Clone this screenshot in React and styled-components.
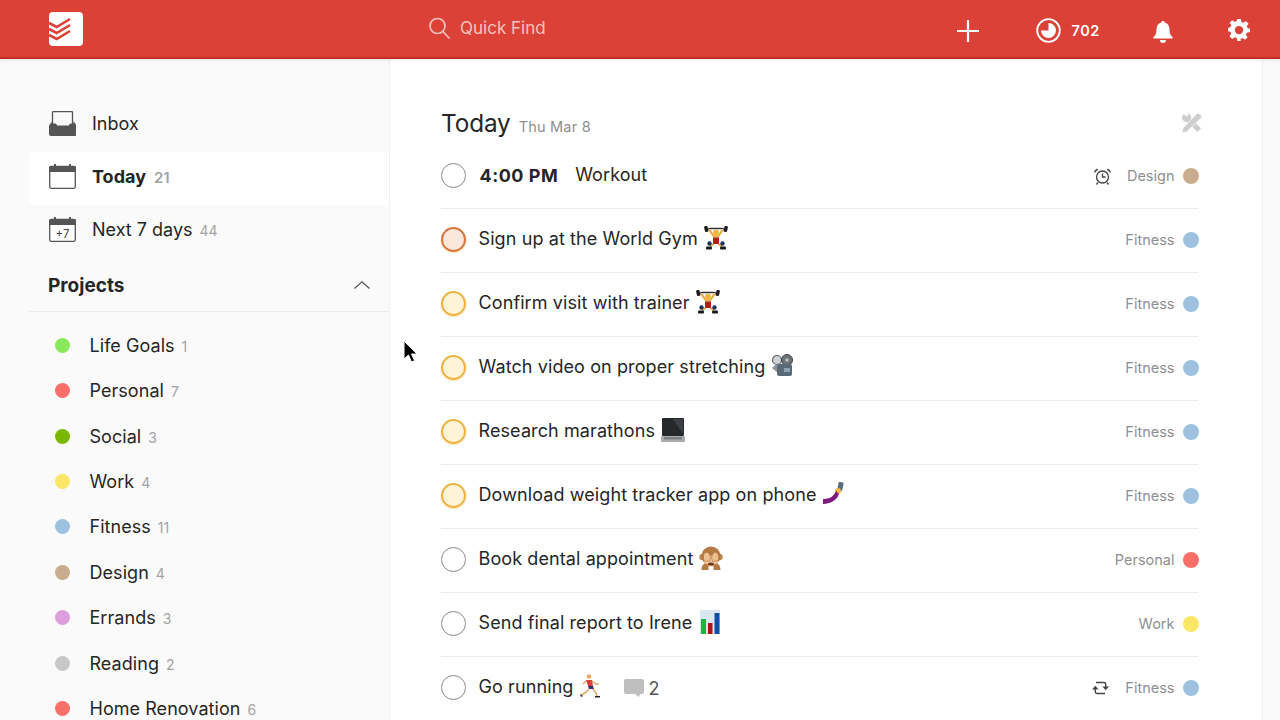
import React from "react";
import styled, { createGlobalStyle } from "styled-components";

const Global = createGlobalStyle`
  html, body { margin: 0; padding: 0; height: 720px; overflow: hidden; background: #fff; }
  body { font-family: Inter, "Noto Sans", "Liberation Sans", sans-serif; color: #262626; -webkit-font-smoothing: antialiased; }
  * { box-sizing: border-box; }
`;

const Page = styled.div`
  position: relative; width: 1280px; height: 720px; overflow: hidden;
  display: flex; flex-direction: column;
`;
const TopBar = styled.header`
  flex: 0 0 59px; height: 59px; background: #dc4138; border-bottom: 2px solid #c42c24;
  box-shadow: 0 1px 3px rgba(0,0,0,.10); position: relative; z-index: 2;
  display: grid; grid-template-columns: 428px 1fr auto; align-items: center; color: #fff;
`;
const LogoWrap = styled.div`padding-left: 49px; display: flex; align-items: center; height: 57px;`;
const Search = styled.div`display: flex; align-items: center; gap: 10px; color: #f6c2bd; font-size: 17px; height: 55px; margin-bottom: 1px;`;
const Actions = styled.div`display: flex; align-items: center; height: 57px; padding-right: 30px;`;
const PlusSlot = styled.div`display: flex; margin-right: 57px; margin-top: 5px;`;
const Karma = styled.div`display: flex; align-items: center; gap: 10px; font-size: 14.5px; font-weight: 600; letter-spacing: .6px; margin-right: 53px; margin-top: 3px;`;
const BellSlot = styled.div`display: flex; margin-right: 55px; margin-top: 7px;`;
const GearSlot = styled.div`display: flex; margin-top: 2px;`;

const Body = styled.div`flex: 1; min-height: 0; display: grid; grid-template-columns: 390px 872px 18px;`;
const Sidebar = styled.aside`background: #fafafa; border-right: 1px solid #f0f0f0; padding: 40px 0 0 29px; overflow: hidden;`;
const NavRow = styled.div`
  height: 53px; display: flex; align-items: center; padding: 0 0 4px 20px; font-size: 18px;
  background: ${p => p.$active ? "#fff" : "transparent"};
  border-radius: 3px 0 0 3px; margin-right: -1px;
  font-weight: ${p => p.$active ? 700 : 400};
`;
const NavIcon = styled.span`width: 43px; display: flex; flex: none;`;
const NavCount = styled.span`font-size: ${p => p.$bold ? 15 : 14}px; color: #a3a3a3; margin-left: ${p => p.$bold ? 8 : 7}px; margin-top: 2px; font-weight: ${p => p.$bold ? 600 : 400};`;
const ProjectsHead = styled.div`
  height: 53px; margin-top: 1px; padding: 0 19px; display: flex; align-items: center; justify-content: space-between;
  border-bottom: 1px solid #ebebeb; font-size: 19px; font-weight: 700;
`;
const ProjectList = styled.div`padding-top: 10.6px;`;
const ProjectRow = styled.div`height: 45.4px; display: flex; align-items: center; padding-left: 26px; font-size: 18px; letter-spacing: .05px;`;
const Dot = styled.span`width: ${p => p.$size || 15}px; height: ${p => p.$size || 15}px; border-radius: 50%; background: ${p => p.$c}; flex: none;`;
const ProjectName = styled.span`margin-left: 19.5px;`;

const Main = styled.main`padding: 42px 64px 0 51px; overflow: hidden;`;
const TitleRow = styled.div`height: 44px; display: flex; align-items: center; position: relative;`;
const Title = styled.h1`margin: 0; font-size: 24.3px; font-weight: 400; letter-spacing: -.1px;`;
const DateText = styled.span`font-size: 14.5px; letter-spacing: .2px; color: #8f8f8f; margin-left: 8px; margin-top: 7px;`;
const Tools = styled.span`position: absolute; right: -4px; top: 12px; display: flex;`;
const Row = styled.div`
  height: 64px; display: flex; align-items: center; border-bottom: 1px solid ${p => p.$last ? "transparent" : "#ebebeb"};
  font-size: 18px; letter-spacing: .1px; padding-bottom: 1px;
`;
const Check = styled.span`
  width: 25px; height: 25px; border-radius: 50%; flex: none; margin: -1px 12.5px 0 0;
  border: ${p => p.$p ? "2px" : "1.5px"} solid ${p => p.$p === 1 ? "#d9763c" : p.$p === 2 ? "#efb543" : "#8a8a8a"};
  background: ${p => p.$p === 1 ? "#fbe7dc" : p.$p === 2 ? "#fff4d6" : "#fff"};
  box-shadow: ${p => p.$p ? "0 1px 2px rgba(240,190,80,.45)" : "none"};
`;
const Time = styled.span`font-weight: 700; letter-spacing: .5px; margin: -2px 17px 0 1px;`;
const TaskText = styled.span`display: flex; align-items: center; gap: 6px; white-space: nowrap; margin-top: -4px;`;
const Comment = styled.span`display: flex; align-items: center; gap: 5px; margin-left: 21px; color: #555; font-size: 18px;`;
const Right = styled.div`margin: 0 -0.5px 0 auto; display: flex; align-items: center; font-size: 14.5px; letter-spacing: 0; color: #8f8f8f;`;
const MetaIcon = styled.span`display: flex; margin-right: 16px;`;
const Label = styled.span`margin: -2px 8px 0 0;`;
const Gutter = styled.div`background: #fafafa; border-left: 1px solid #f0f0f0;`;
const Cursor = styled.svg`position: absolute; left: 403px; top: 340px; z-index: 3;`;

const Logo = () => (
  <svg width="34" height="34" viewBox="0 0 34 34">
    <rect width="34" height="34" rx="4" fill="#fff" />
    <g fill="none" stroke="#db4139" strokeWidth="2.600">
      <path d="M0 11 7.700 15 21 7" />
      <path d="M0 17 7.700 21 21 13" />
      <path d="M0 23 7.700 27 21 19" />
    </g>
  </svg>
);
const SearchIcon = () => (
  <svg width="22" height="22" viewBox="0 0 22 22" fill="none" stroke="#f6c2bd" strokeWidth="1.7">
    <circle cx="9.5" cy="9" r="7.5" /><path d="M15 14.5 21 21" strokeLinecap="round" />
  </svg>
);
const Plus = () => (
  <svg width="22" height="22" viewBox="0 0 22 22" stroke="#fff" strokeWidth="2.200"><path d="M11 0v22M0 11h22" /></svg>
);
const KarmaIcon = () => (
  <svg width="25" height="25" viewBox="0 0 25 25">
    <circle cx="12.500" cy="12.500" r="11.300" fill="none" stroke="#fff" strokeWidth="1.800" />
    <path d="M12.500 5a7.500 7.500 0 1 1-7.500 7.500h7.500z" fill="#fff" />
  </svg>
);
const Bell = () => (
  <svg width="20" height="23" viewBox="0 0 20 23" fill="#fff">
    <path d="M10 0c1 0 1.700.6 1.800 1.600C15 2.400 16.500 5 16.500 8.500c0 4 1 5.800 3 7.500.5.500.3 1.500-.6 1.500H1.100C.2 17.500 0 16.500.5 16c2-1.700 3-3.500 3-7.500C3.500 5 5 2.400 8.200 1.600 8.300.6 9 0 10 0z" />
    <path d="M7 19h6a3 3 0 0 1-6 0z" />
  </svg>
);
const Gear = () => (
  <svg width="22" height="22" viewBox="0 0 24 24">
    <path fill="#fff" fillRule="evenodd" d="M10 0h4l.6 3.200 2.300 1 2.700-1.900 2.800 2.800-1.900 2.700 1 2.300L24 10.700v3.600l-3.500.6-1 2.300 1.900 2.700-2.800 2.800-2.700-1.900-2.300 1L13.900 24h-3.800l-.6-3.200-2.300-1-2.700 1.900-2.800-2.800 1.900-2.700-1-2.300L0 13.300v-3.600l2.600-.6 1-2.300-1.900-2.700 2.800-2.800 2.700 1.900 2.300-1zM12 7.500a4.500 4.500 0 1 0 0 9 4.500 4.500 0 0 0 0-9z" />
  </svg>
);
const InboxIcon = () => (
  <svg width="27" height="25" viewBox="0 0 27 25">
    <path d="M3.500 14V1.500a1 1 0 0 1 1-1h18a1 1 0 0 1 1 1V14" fill="none" stroke="#555" strokeWidth="1.300" />
    <path d="M0 14.500 3.500 10v2.500h2.800c.6 0 1 .3 1.200.8l.6 1.200h11.800l.6-1.200c.2-.5.6-.8 1.200-.8h2.800V10l3 4.500V23a2 2 0 0 1-2 2H2a2 2 0 0 1-2-2z" fill="#555" />
  </svg>
);
const CalendarIcon = ({ plus }) => (
  <svg width="27" height="25" viewBox="0 0 27 25">
    <rect x=".7" y="2.500" width="25.600" height="21.800" rx="1.500" fill="#fff" stroke="#555" strokeWidth="1.300" />
    <path d="M0 3.500A1.500 1.500 0 0 1 1.500 2H5V0h2v2h13V0h2v2h3.500A1.500 1.500 0 0 1 27 3.500V8H0z" fill="#555" />
    {plus && <text x="13.500" y="20.500" textAnchor="middle" fontSize="11.500" fontFamily="Inter, sans-serif" fill="#444">+7</text>}
  </svg>
);
const Chevron = () => (
  <svg width="16" height="8" viewBox="0 0 16 8" fill="none" stroke="#555" strokeWidth="1.200"><path d="M.5 7.500 8 .8l7.500 6.700" /></svg>
);
const ToolsIcon = () => (
  <svg width="20" height="20" viewBox="0 0 20 20" fill="#cdcdcd">
    <path d="M0 4.500 1.500 1l3 2.500L7 1.500 4.800 0C8 .2 9.500 2 9.200 5.500L19 15.300 15.500 19 5.200 9C2.500 9.500.3 7.500 0 4.500z" />
    <path d="M18.500 1.500 15.500 0l-1.500 1.500L1 15l-1 5 4.500-1 13.500-13 2-2z" stroke="#fff" strokeWidth=".8" />
  </svg>
);
const Alarm = () => (
  <svg width="17" height="17" viewBox="0 0 17 17" fill="none" stroke="#444" strokeWidth="1.300">
    <circle cx="8.500" cy="9" r="6" />
    <path d="M8.500 5.500V9h3" />
    <path d="M.7 4.500 4 1.300C2 .8.500 2.500.7 4.500zM16.300 4.500 13 1.300c2-.5 3.500 1.200 3.300 3.200z" fill="#444" strokeWidth=".8" />
    <path d="M4 14.500 2.500 16.500M13 14.500l1.500 2" />
  </svg>
);
const Repeat = () => (
  <svg width="17" height="16" viewBox="0 0 17 16" fill="none" stroke="#444" strokeWidth="1.400">
    <path d="M4 2.500h8a1.700 1.700 0 0 1 1.700 1.700V7" />
    <path d="M10.500 6.500h6.400l-3.200 3.800z" fill="#444" stroke="none" />
    <path d="M13 13.500H5a1.700 1.700 0 0 1-1.700-1.700V9" />
    <path d="M.1 9.500h6.400L3.300 5.700z" fill="#444" stroke="none" />
  </svg>
);
const CommentIcon = () => (
  <svg width="20" height="19" viewBox="0 0 20 19"><path d="M2 0h16a2 2 0 0 1 2 2v11a2 2 0 0 1-2 2h-2l-1 3-4-3H2a2 2 0 0 1-2-2V2a2 2 0 0 1 2-2z" fill="#bfbfbf" /></svg>
);

const Lifter = () => (
  <svg width="24" height="24" viewBox="0 0 24 24">
    <path d="M1 4 6 2.500h12L23 4" stroke="#333" strokeWidth="1.300" fill="none" />
    <rect x=".5" y="0" width="3.500" height="6" rx="1.200" fill="#1c1c1c" transform="rotate(-14 2 3)" /><rect x="20" y="0" width="3.500" height="6" rx="1.200" fill="#1c1c1c" transform="rotate(14 22 3)" />
    <path d="M5.500 4 9.500 10M18.500 4l-4 6" stroke="#e8a83c" strokeWidth="2.200" />
    <circle cx="12" cy="6.500" r="2.800" fill="#f0b63c" />
    <rect x="9" y="9" width="6" height="3" fill="#e8b85a" />
    <rect x="9" y="11.500" width="6" height="6.500" fill="#b3201a" />
    <path d="M9.500 18 6 20.500M14.500 18l3.500 2.500" stroke="#e3a84c" strokeWidth="2" />
    <circle cx="5.500" cy="17.500" r="2.200" fill="#1b3558" /><circle cx="18.500" cy="17.500" r="2.200" fill="#1b3558" />
    <rect x="2" y="20.500" width="6" height="3" rx="1" fill="#1c1c1c" /><rect x="16" y="20.500" width="6" height="3" rx="1" fill="#1c1c1c" />
  </svg>
);
const Projector = () => (
  <svg width="25" height="24" viewBox="1 0 25 24">
    <circle cx="7" cy="6" r="4.500" fill="#cfd3d6" stroke="#5a6066" strokeWidth="1.200" />
    <circle cx="17" cy="6" r="5.500" fill="#6d7276" stroke="#3f4448" strokeWidth="1" /><circle cx="17" cy="6" r="1.800" fill="#bbb" />
    <path d="M2 14 8 9v10z" fill="#8d9398" />
    <rect x="7" y="10" width="15" height="12" rx="2" fill="#586a78" />
    <rect x="14" y="14" width="6" height="4" fill="#8ea1ae" />
  </svg>
);
const Laptop = () => (
  <svg width="24" height="24" viewBox="0 0 24 24">
    <rect x="1" y="0" width="22" height="18" rx="1" fill="#26292c" />
    <path d="M12 1h10v15z" fill="#3d4145" />
    <rect y="18" width="24" height="6" rx="1" fill="#a9acae" />
    <rect x="3" y="19" width="18" height="2.500" fill="#7f8285" />
  </svg>
);
const Selfie = () => (
  <svg width="24" height="24" viewBox="2 0 24 24">
    <rect x="17" y="0" width="5" height="9" rx="1" transform="rotate(12 19 4)" fill="#5b6a7a" />
    <circle cx="17" cy="9" r="3" fill="#efb93f" />
    <path d="M1 17c6 0 11-1 14-8l3 3c-2 6-8 10-17 10z" fill="#7d1a82" />
  </svg>
);
const Monkey = () => (
  <svg width="24" height="24" viewBox="0 0 24 24">
    <circle cx="3.500" cy="11" r="3.200" fill="#c08550" /><circle cx="20.500" cy="11" r="3.200" fill="#c08550" />
    <ellipse cx="12" cy="10" rx="9.500" ry="9.500" fill="#b57a42" />
    <ellipse cx="12" cy="15" rx="7" ry="5.500" fill="#eec79d" />
    <path d="M4.500 9c2-4 5.500-4 7 2.500l-1 4-6-1zM19.500 9c-2-4-5.500-4-7 2.500l1 4 6-1z" fill="#eec08f" stroke="#a86f3d" strokeWidth=".6" />
    <ellipse cx="12" cy="18" rx="3" ry="1.500" fill="#6b3a20" />
    <path d="M2.500 24c0-4 2-6.500 4-6.500l3 1.500v5zM21.500 24c0-4-2-6.500-4-6.500l-3 1.500v5z" fill="#b57a42" />
  </svg>
);
const Chart = () => (
  <svg width="22" height="24" viewBox="-2 0 22 24">
    <rect width="20" height="24" fill="#dbe7f0" />
    <rect x="1" y="9" width="5" height="15" fill="#22b33b" /><rect x="8" y="13" width="4.500" height="11" fill="#b51212" /><rect x="14.500" y="3" width="5" height="21" fill="#0f4fa8" />
  </svg>
);
const Runner = () => (
  <svg width="23" height="24" viewBox="1 0 23 24">
    <circle cx="10" cy="2.500" r="2.300" fill="#e8a868" />
    <path d="M7 6h6l1 6H9z" fill="#d9423b" />
    <path d="M7 7 4 10M13 7l4 3 3 0" stroke="#e8a868" strokeWidth="1.500" fill="none" />
    <path d="M9 12h5l1 3h-5z" fill="#3b3566" />
    <path d="M10 15 6 19 2 21M14 15l3 4 1 4" stroke="#e8a868" strokeWidth="1.600" fill="none" />
    <path d="M1 20l3 2-2 1zM16 22h5v1.500h-5z" fill="#222" />
  </svg>
);

const nav = [
  { key: "inbox", icon: <InboxIcon />, name: "Inbox" },
  { key: "today", icon: <CalendarIcon />, name: "Today", count: 21, active: true },
  { key: "next", icon: <CalendarIcon plus />, name: "Next 7 days", count: 44 },
];
const projects = [
  ["Life Goals", 1, "#8ae85d"], ["Personal", 7, "#f9706a"], ["Social", 3, "#7ab800"],
  ["Work", 4, "#fbe667"], ["Fitness", 11, "#9ec1e0"], ["Design", 4, "#c9ac8e"],
  ["Errands", 3, "#dd9ede"], ["Reading", 2, "#c8c8c8"], ["Home Renovation", 6, "#f9706a"],
];
const fit = "#9ec1e0", per = "#f9706a", wrk = "#fbe667";
const tasks = [
  { text: "Sign up at the World Gym", emoji: <Lifter />, p: 1, label: "Fitness", c: fit },
  { text: "Confirm visit with trainer", emoji: <Lifter />, p: 2, label: "Fitness", c: fit },
  { text: "Watch video on proper stretching", emoji: <Projector />, p: 2, label: "Fitness", c: fit },
  { text: "Research marathons", emoji: <Laptop />, p: 2, label: "Fitness", c: fit },
  { text: "Download weight tracker app on phone", emoji: <Selfie />, p: 2, label: "Fitness", c: fit },
  { text: "Book dental appointment", emoji: <Monkey />, label: "Personal", c: per },
  { text: "Send final report to Irene", emoji: <Chart />, label: "Work", c: wrk },
  { text: "Go running", emoji: <Runner />, label: "Fitness", c: fit, comments: 2, meta: <Repeat />, last: true },
];

export default function App() {
  return (
    <Page>
      <Global />
      <TopBar>
        <LogoWrap><Logo /></LogoWrap>
        <Search><SearchIcon /><span>Quick Find</span></Search>
        <Actions>
          <PlusSlot><Plus /></PlusSlot>
          <Karma><KarmaIcon /><span>702</span></Karma>
          <BellSlot><Bell /></BellSlot>
          <GearSlot><Gear /></GearSlot>
        </Actions>
      </TopBar>
      <Body>
        <Sidebar>
          {nav.map(n => (
            <NavRow key={n.key} $active={n.active}>
              <NavIcon>{n.icon}</NavIcon>
              <span>{n.name}</span>
              {n.count && <NavCount $bold={n.active}>{n.count}</NavCount>}
            </NavRow>
          ))}
          <ProjectsHead><span>Projects</span><Chevron /></ProjectsHead>
          <ProjectList>
            {projects.map(([name, count, c]) => (
              <ProjectRow key={name}>
                <Dot $c={c} />
                <ProjectName>{name}</ProjectName>
                <NavCount>{count}</NavCount>
              </ProjectRow>
            ))}
          </ProjectList>
        </Sidebar>
        <Main>
          <TitleRow>
            <Title>Today</Title><DateText>Thu Mar 8</DateText>
            <Tools><ToolsIcon /></Tools>
          </TitleRow>
          <Row>
            <Check />
            <Time>4:00 PM</Time>
            <TaskText>Workout</TaskText>
            <Right>
              <MetaIcon><Alarm /></MetaIcon>
              <Label>Design</Label><Dot $size={16} $c="#c9ac8e" />
            </Right>
          </Row>
          {tasks.map(t => (
            <Row key={t.text} $last={t.last}>
              <Check $p={t.p} />
              <TaskText>{t.text} {t.emoji}</TaskText>
              {t.comments && <Comment><CommentIcon />{t.comments}</Comment>}
              <Right>
                {t.meta && <MetaIcon>{t.meta}</MetaIcon>}
                <Label>{t.label}</Label><Dot $size={16} $c={t.c} />
              </Right>
            </Row>
          ))}
        </Main>
        <Gutter />
      </Body>
      <Cursor width="16" height="24" viewBox="0 0 16 24">
        <path d="M1 1v18l4.500-4 3 7 3-1.300-3-6.700H14z" fill="#000" stroke="#fff" strokeWidth="1" />
      </Cursor>
    </Page>
  );
}
